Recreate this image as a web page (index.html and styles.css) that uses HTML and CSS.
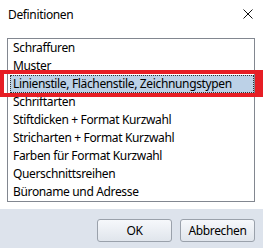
FILE: index.html
```html
<!DOCTYPE html>
<html lang="de">
<head>
  <meta charset="UTF-8" />
  <title>Definitionen</title>
  <link rel="stylesheet" href="styles.css">
</head>
<body>
  <div class="dialog">

    <div class="header">
      <span class="title">Definitionen</span>
      <svg class="close" width="10" height="10" viewBox="0 0 10 10">
        <path d="M0.5 0.5 L9.5 9.5 M9.5 0.5 L0.5 9.5" stroke="#111" stroke-width="1" fill="none" />
      </svg>
    </div>

    <!-- Liste -->
    <div class="list">
      <div class="item">Schraffuren</div>
      <div class="item">Muster</div>
      <div class="item selected">Linienstile, Flächenstile, Zeichnungstypen</div>
      <div class="item">Schriftarten</div>
      <div class="item">Stiftdicken + Format Kurzwahl</div>
      <div class="item">Stricharten + Format Kurzwahl</div>
      <div class="item">Farben für Format Kurzwahl</div>
      <div class="item">Querschnittsreihen</div>
      <div class="item">Büroname und Adresse</div>
    </div>

    <div class="footer">
      <button class="btn">OK</button>
      <button class="btn">Abbrechen</button>
    </div>

    <div class="marker"></div>
  </div>
</body>
</html>
```

FILE: styles.css
```css
body {
  margin: 0;
  padding: 0;
  background: #fff;
  font-family: 'Noto Sans', 'Open Sans', sans-serif;
  font-size: 12px;
  letter-spacing: -0.35px;
  color: #000;
}

.dialog {
  position: relative;
  width: 263px;
  height: 248px;
  overflow: hidden;
}

.header {
  height: 38px;
  display: flex;
  justify-content: space-between;
  align-items: flex-start;
  padding: 0 10px 0 8px;
  box-sizing: border-box;
}

.title {
  margin-top: 6px;
  line-height: 18px;
}

.close {
  margin-top: 9px;
}

.list {
  margin: 0 8px 0 7px;
  height: 164px;
  box-sizing: border-box;
  border: 1px solid #828790;
  padding-left: 2px;
}

.item {
  height: 18px;
  line-height: 18px;
  padding-left: 3px;
  white-space: nowrap;
  box-sizing: border-box;
}

.item.selected {
  background: #bcd1e7;
  outline: 1px dotted #333;
  outline-offset: -1px;
}

.footer {
  margin-top: 7px;
  height: 40px;
  background: #dde3ec;
  display: flex;
  justify-content: flex-end;
  align-items: flex-start;
  gap: 8px;
  padding: 10px 8px 0 0;
  box-sizing: border-box;
}

.btn {
  width: 75px;
  height: 23px;
  font-family: inherit;
  font-size: 12px;
  letter-spacing: inherit;
  color: #000;
  border: 1px solid #9aa1ab;
  border-radius: 3px;
  background: linear-gradient(#f6f8fb, #e0e5ec);
  padding: 0;
}

.marker {
  position: absolute;
  left: 0;
  top: 70px;
  width: 263px;
  height: 27px;
  box-sizing: border-box;
  border: 4px solid #e61e25;
  border-right-width: 8px;
}
```
